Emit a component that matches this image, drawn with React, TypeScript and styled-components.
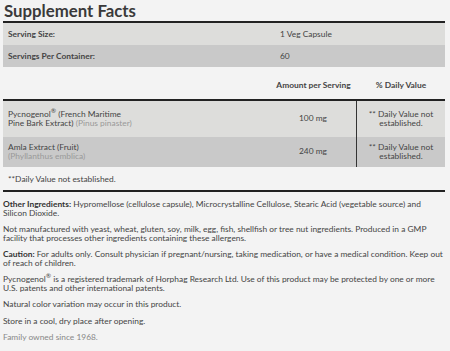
import React from 'react';
import styled, { createGlobalStyle } from 'styled-components';

const GlobalStyle = createGlobalStyle`
  html, body {
    margin: 0;
    padding: 0;
    background: #f3f3f3;
  }
  body {
    font-family: Lato, 'Open Sans', sans-serif;
    color: #444;
  }
`;

const Page = styled.div`
  width: 442px;
  padding: 0 5px 0 3px;
`;

const Title = styled.h2`
  margin: 0;
  padding-left: 1px;
  font-size: 16.8px;
  line-height: 21px;
  font-weight: 700;
  color: #3a3a3a;
`;

const Section = styled.div<{ thick?: number }>`
  border-top: ${(p) => p.thick ?? 2}px solid #222;
`;

const ServingRow = styled.div<{ dark?: boolean }>`
  display: grid;
  grid-template-columns: 272px 1fr;
  align-items: center;
  height: 22px;
  padding: 0 5px;
  background: ${(p) => (p.dark ? '#c9c9c9' : '#dddddb')};
  font-size: 8.4px;
`;

const Label = styled.span`
  font-weight: 700;
  color: #444;
`;

const Value = styled.span`
  color: #444;
`;

const IngredientGrid = styled.div`
  display: grid;
  grid-template-columns: 1fr 87px 88px;
  font-size: 8.4px;
  line-height: 8.5px;
`;

const HeadCell = styled.div`
  padding: 14px 0 9px;
  font-weight: 700;
  text-align: center;
  color: #444;
  white-space: nowrap;
`;

const NameCell = styled.div<{ dark?: boolean; tall?: boolean }>`
  display: flex;
  flex-direction: column;
  justify-content: center;
  padding: 0 5px;
  height: ${(p) => (p.tall ? 36 : 30)}px;
  background: ${(p) => (p.dark ? '#c9c9c9' : '#dddddb')};
  white-space: nowrap;
`;

const AmountCell = styled(NameCell)`
  align-items: center;
  padding: 0;
  border-right: 1.5px solid #333;
`;

const DvCell = styled(NameCell)`
  align-items: center;
  text-align: center;
  padding: 0;
`;

const Latin = styled.span`
  color: #999;
`;

const Sup = styled.sup`
  font-size: 6.5px;
  line-height: 0;
`;

const Footnote = styled.div`
  padding: 8px 5px 7px;
  font-size: 8.4px;
  line-height: 8.5px;
  color: #444;
`;

const Notes = styled.div`
  border-top: 2.5px solid #222;
  padding-top: 8px;
  font-size: 8.4px;
  line-height: 8.5px;
  white-space: nowrap;
`;

const Para = styled.p<{ muted?: boolean }>`
  margin: 0 0 8px;
  color: ${(p) => (p.muted ? '#888' : '#444')};
`;

const Strong = styled.strong`
  font-weight: 700;
  color: #333;
`;

const ingredients = [
  {
    name: (
      <>
        Pycnogenol<Sup>®</Sup> (French Maritime
        <br />
        Pine Bark Extract) <Latin>(Pinus pinaster)</Latin>
      </>
    ),
    amount: '100 mg',
    dark: false,
    tall: true,
  },
  {
    name: (
      <>
        Amla Extract (Fruit)
        <br />
        <Latin>(Phyllanthus emblica)</Latin>
      </>
    ),
    amount: '240 mg',
    dark: true,
    tall: false,
  },
];

export default function App() {
  return (
    <Page>
      <GlobalStyle />
      <Title>Supplement Facts</Title>
      <Section>
        <ServingRow>
          <Label>Serving Size:</Label>
          <Value>1 Veg Capsule</Value>
        </ServingRow>
        <ServingRow dark>
          <Label>Servings Per Container:</Label>
          <Value>60</Value>
        </ServingRow>
      </Section>

      <IngredientGrid>
        <HeadCell />
        <HeadCell>Amount per Serving</HeadCell>
        <HeadCell>% Daily Value</HeadCell>
      </IngredientGrid>
      <Section>
        <IngredientGrid>
          {ingredients.map((ing) => (
            <React.Fragment key={ing.amount}>
              <NameCell dark={ing.dark} tall={ing.tall}>
                <div>{ing.name}</div>
              </NameCell>
              <AmountCell dark={ing.dark} tall={ing.tall}>
                {ing.amount}
              </AmountCell>
              <DvCell dark={ing.dark} tall={ing.tall}>
                <div>
                  ** Daily Value not
                  <br />
                  established.
                </div>
              </DvCell>
            </React.Fragment>
          ))}
        </IngredientGrid>
      </Section>

      <Footnote>**Daily Value not established.</Footnote>

      <Notes>
        <Para>
          <Strong>Other Ingredients:</Strong> Hypromellose (cellulose capsule), Microcrystalline Cellulose,
          Stearic Acid (vegetable source) and
          <br />
          Silicon Dioxide.
        </Para>
        <Para>
          Not manufactured with yeast, wheat, gluten, soy, milk, egg, fish, shellfish or tree nut ingredients.
          Produced in a GMP
          <br />
          facility that processes other ingredients containing these allergens.
        </Para>
        <Para>
          <Strong>Caution:</Strong> For adults only. Consult physician if pregnant/nursing, taking medication,
          or have a medical condition. Keep out
          <br />
          of reach of children.
        </Para>
        <Para>
          Pycnogenol<Sup>®</Sup> is a registered trademark of Horphag Research Ltd. Use of this product may be
          protected by one or more
          <br />
          U.S. patents and other international patents.
        </Para>
        <Para>Natural color variation may occur in this product.</Para>
        <Para>Store in a cool, dry place after opening.</Para>
        <Para muted>Family owned since 1968.</Para>
      </Notes>
    </Page>
  );
}
